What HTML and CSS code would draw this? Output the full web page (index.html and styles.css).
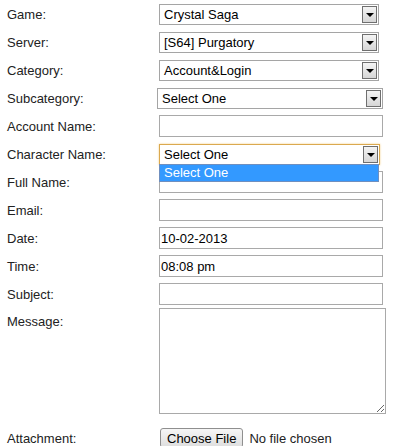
FILE: index.html
```html
<!DOCTYPE html>
<html lang="en">
<head>
  <meta charset="UTF-8" />
  <title>Support Ticket</title>
  <link rel="stylesheet" href="styles.css">
</head>
<body>
  <form class="ticket">
    <div class="row">
      <label>Game:</label>
      <div class="select"><span class="value">Crystal Saga</span><span class="arrow"></span></div>
    </div>
    <div class="row">
      <label>Server:</label>
      <div class="select"><span class="value">[S64] Purgatory</span><span class="arrow"></span></div>
    </div>
    <div class="row">
      <label>Category:</label>
      <div class="select"><span class="value">Account&amp;Login</span><span class="arrow"></span></div>
    </div>
    <div class="row">
      <label>Subcategory:</label>
      <div class="select wide"><span class="value">Select One</span><span class="arrow"></span></div>
    </div>
    <div class="row">
      <label>Account Name:</label>
      <input type="text" class="field">
    </div>
    <div class="row">
      <label>Character Name:</label>
      <div class="select focused">
        <span class="value">Select One</span><span class="arrow"></span>
        <div class="dropdown">Select One</div>
      </div>
    </div>
    <div class="row">
      <label>Full Name:</label>
      <input type="text" class="field">
    </div>
    <div class="row">
      <label>Email:</label>
      <input type="text" class="field">
    </div>
    <div class="row">
      <label>Date:</label>
      <input type="text" class="field" value="10-02-2013">
    </div>
    <div class="row">
      <label>Time:</label>
      <input type="text" class="field" value="08:08 pm">
    </div>
    <div class="row">
      <label>Subject:</label>
      <input type="text" class="field">
    </div>
    <div class="row top">
      <label>Message:</label>
      <textarea class="message"></textarea>
    </div>
    <div class="row">
      <label>Attachment:</label>
      <input type="file" class="file">
    </div>
  </form>
</body>
</html>
```

FILE: styles.css
```css
body {
  margin: 0;
  font-family: 'Liberation Sans', Arial, sans-serif;
  font-size: 13px;
  color: #222;
  background: #fff;
}
.ticket {
  padding-left: 7px;
}
.row {
  display: grid;
  grid-template-columns: 152px auto;
  align-items: center;
  justify-items: start;
  height: 28px;
}
.row.top {
  align-items: start;
  height: auto;
  line-height: 28px;
  padding-bottom: 10px;
}
.select {
  position: relative;
  box-sizing: border-box;
  display: flex;
  align-items: center;
  width: 220px;
  height: 21px;
  padding: 1px;
  border: 1px solid #a5a5a5;
  background: #fff;
  color: #000;
}
.select.wide {
  width: 226px;
  margin-left: -2px;
}
.select.focused {
  width: 221px;
  border-color: #dba94f;
  box-shadow: 0 0 2px #f3cf8a;
}
.select .value {
  flex: 1;
  padding-left: 3px;
  line-height: 17px;
}
.select .arrow {
  box-sizing: border-box;
  width: 15px;
  height: 17px;
  border: 1px solid #6f6f6f;
  background: linear-gradient(#f4f4f4, #d6d6d6);
  display: flex;
  align-items: center;
  justify-content: center;
}
.select .arrow::after {
  content: "";
  border-left: 4px solid transparent;
  border-right: 4px solid transparent;
  border-top: 4px solid #000;
  margin-top: 1px;
}
.dropdown {
  position: absolute;
  top: 100%;
  left: -1px;
  box-sizing: border-box;
  width: 220px;
  height: 18px;
  padding-left: 4px;
  line-height: 16px;
  background: #3399ff;
  border: 1px solid #6f8fbf;
  color: #fff;
  z-index: 2;
}
.field {
  box-sizing: border-box;
  width: 224px;
  height: 22px;
  margin: 0;
  padding: 0 1px;
  border: 1px solid #a9a9a9;
  font: inherit;
  color: #000;
}
.message {
  box-sizing: border-box;
  width: 227px;
  height: 106px;
  margin: 0;
  border: 1px solid #a9a9a9;
  font: inherit;
}
.file {
  margin: 0 0 0 1px;
  font: inherit;
  color: #222;
}
.file::file-selector-button {
  font: inherit;
  color: #000;
  height: 20px;
  margin-right: 6px;
  padding: 0 6px;
  border: 1px solid #8f8f8f;
  border-radius: 3px;
  background: linear-gradient(#f6f6f6, #dedede);
}
```
